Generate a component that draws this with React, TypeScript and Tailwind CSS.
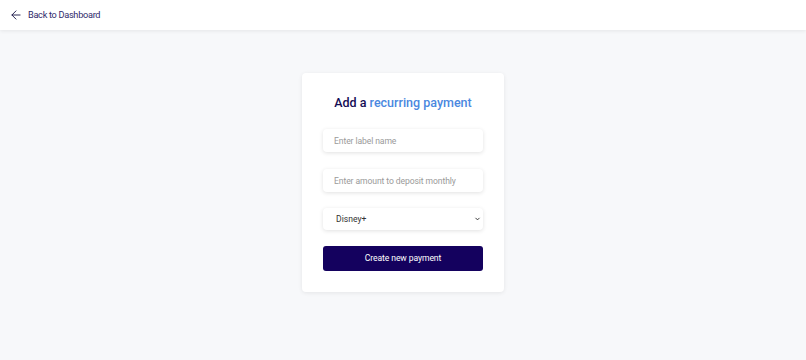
import { ArrowLeft, ChevronDown } from "lucide-react"

export default function App() {
  return (
    <div className="min-h-screen bg-[#f7f8fa] font-['Roboto',sans-serif]">
      <header className="h-[30px] bg-white shadow-[0_1px_4px_rgba(0,0,0,0.08)] flex items-center px-[9px]">
        <a href="#" className="flex items-center gap-[5px] text-[9.2px] tracking-[-0.3px] text-[#2f2a6b]">
          <ArrowLeft className="w-[14px] h-[14px] text-[#1d1a4a]" strokeWidth={1.6} />
          Back to Dashboard
        </a>
      </header>
      <main className="flex justify-center pt-[43px]">
        <div className="w-[202px] bg-white rounded-[4px] shadow-[0_1px_4px_rgba(0,0,0,0.08)] px-[21px] pt-[21px] pb-[21px]">
          <h1 className="text-center text-[12.5px] font-medium text-[#150d55] leading-[18px]">
            Add a <span className="text-[#4a88e0]">recurring payment</span>
          </h1>
          <div className="mt-[17px] flex flex-col gap-[17px]">
            <input
              placeholder="Enter label name"
              className="block h-[23px] w-full rounded-[4px] bg-white px-[11px] text-[8.6px] tracking-[-0.1px] text-[#333] placeholder:text-[#9a9a9a] shadow-[0_1px_4px_rgba(0,0,0,0.12)] outline-none"
            />
            <input
              placeholder="Enter amount to deposit monthly"
              className="block h-[23px] w-full rounded-[4px] bg-white px-[11px] text-[8.6px] tracking-[-0.1px] text-[#333] placeholder:text-[#9a9a9a] shadow-[0_1px_4px_rgba(0,0,0,0.12)] outline-none"
            />
            <div className="relative -mt-[1px]">
              <select className="block appearance-none h-[22px] w-full rounded-[4px] bg-white pl-[13px] pr-[20px] text-[8.6px] leading-[22px] text-[#333] shadow-[0_1px_4px_rgba(0,0,0,0.12)] outline-none">
                <option>Disney+</option>
              </select>
              <ChevronDown
                className="pointer-events-none absolute right-[2px] top-1/2 -translate-y-1/2 w-[7px] h-[7px] text-[#222]"
                strokeWidth={3}
              />
            </div>
          </div>
          <button className="block mt-[16px] h-[25px] w-full rounded-[3px] bg-[#14015e] text-white text-[8.6px] tracking-[-0.1px]">
            Create new payment
          </button>
        </div>
      </main>
    </div>
  )
}
